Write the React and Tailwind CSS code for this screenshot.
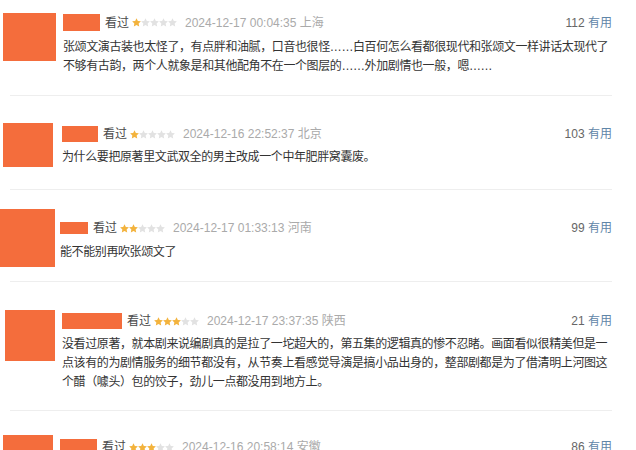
import React from 'react';

const Star = ({ on }) => (
  <svg viewBox="1.5 1.5 21 21" className="w-[9px] h-[9px]">
    <path
      d="M12 1.8l3.1 6.6 7.1.9-5.2 4.9 1.3 7.1L12 17.8l-6.3 3.5 1.3-7.1-5.2-4.9 7.1-.9z"
      fill={on ? '#f3b33d' : '#e2e2e2'}
    />
  </svg>
);

const Stars = ({ n }) => (
  <div className="flex ml-[3px]">
    {[1, 2, 3, 4, 5].map((i) => (
      <Star key={i} on={i <= n} />
    ))}
  </div>
);

const Header = ({ name, stars, time, votes }) => (
  <div className="flex items-center text-[12px] leading-[16px]">
    {name}
    <span className="ml-[5px] text-[#494949]">看过</span>
    <Stars n={stars} />
    <span className="ml-[8px] text-[#aaa]">{time}</span>
    <span className="ml-auto text-[#666]">
      {votes} <span className="text-[#5f86a8]">有用</span>
    </span>
  </div>
);

const Divider = () => <div className="ml-[10px] mr-[24px] h-px bg-[#eeeeee]" />;

export default function App() {
  return (
    <div
      className="w-[636px] h-[450px] overflow-hidden bg-white"
      style={{ fontFamily: '"Liberation Sans", "Noto Sans CJK SC", sans-serif' }}
    >
      {/* 1 */}
      <div className="flex items-start pr-[24px]">
        <div className="shrink-0 w-[53px] h-[48px] mt-[13px] ml-[3px] bg-[#f46d3c]" />
        <div className="flex-1 ml-[7px] mt-[14px] pb-[19px]">
          <Header
            name={<div className="w-[37px] h-[17px] bg-[#f46d3c]" />}
            stars={1}
            time="2024-12-17 00:04:35 上海"
            votes="112"
          />
          <p className="mt-[7px] -mr-[3px] text-[12px] leading-[19px] tracking-[-0.4px] text-[#333]">
            张颂文演古装也太怪了，有点胖和油腻，口音也很怪……白百何怎么看都很现代和张颂文一样讲话太现代了不够有古韵，两个人就象是和其他配角不在一个图层的……外加剧情也一般，嗯……
          </p>
        </div>
      </div>
      <Divider />

      {/* 2 */}
      <div className="flex items-start pr-[24px]">
        <div className="shrink-0 w-[50px] h-[44px] mt-[27px] ml-[3px] bg-[#f46d3c]" />
        <div className="flex-1 ml-[9px] mt-[30px] pb-[22px]">
          <Header
            name={<div className="w-[36px] h-[16px] bg-[#f46d3c]" />}
            stars={1}
            time="2024-12-16 22:52:37 北京"
            votes="103"
          />
          <p className="mt-[6px] text-[12px] leading-[19px] tracking-[-0.4px] text-[#333]">
            为什么要把原著里文武双全的男主改成一个中年肥胖窝囊废。
          </p>
        </div>
      </div>
      <Divider />

      {/* 3 */}
      <div className="flex items-start pr-[24px]">
        <div className="shrink-0 w-[55px] h-[58px] mt-[19px] bg-[#f46d3c]" />
        <div className="flex-1 ml-[5px] mt-[30px] pb-[19px]">
          <Header
            name={<div className="w-[28px] h-[12px] bg-[#f46d3c]" />}
            stars={2}
            time="2024-12-17 01:33:13 河南"
            votes="99"
          />
          <p className="mt-[7px] text-[12px] leading-[19px] tracking-[-0.4px] text-[#333]">能不能别再吹张颂文了</p>
        </div>
      </div>
      <Divider />

      {/* 4 */}
      <div className="flex items-start pr-[24px]">
        <div className="shrink-0 w-[50px] h-[51px] mt-[28px] ml-[5px] bg-[#f46d3c]" />
        <div className="flex-1 ml-[7px] mt-[31px] pb-[18px]">
          <Header
            name={<div className="w-[60px] h-[16px] bg-[#f46d3c]" />}
            stars={3}
            time="2024-12-17 23:37:35 陕西"
            votes="21"
          />
          <p className="mt-[6px] -mr-[3px] text-[12px] leading-[19px] tracking-[-0.4px] text-[#333]">
            没看过原著，就本剧来说编剧真的是拉了一坨超大的，第五集的逻辑真的惨不忍睹。画面看似很精美但是一点该有的为剧情服务的细节都没有，从节奏上看感觉导演是搞小品出身的，整部剧都是为了借清明上河图这个醋（噱头）包的饺子，劲儿一点都没用到地方上。
          </p>
        </div>
      </div>
      <Divider />

      {/* 5 */}
      <div className="flex items-start pr-[24px]">
        <div className="shrink-0 w-[50px] h-[50px] mt-[24px] ml-[3px] bg-[#f46d3c]" />
        <div className="flex-1 ml-[7px] mt-[28px] pb-[18px]">
          <Header
            name={<div className="w-[37px] h-[16px] bg-[#f46d3c]" />}
            stars={3}
            time="2024-12-16 20:58:14 安徽"
            votes="86"
          />
          <p className="mt-[6px] text-[12px] leading-[19px] tracking-[-0.4px] text-[#333]">剧情拖沓，看不下去。</p>
        </div>
      </div>
    </div>
  );
}
